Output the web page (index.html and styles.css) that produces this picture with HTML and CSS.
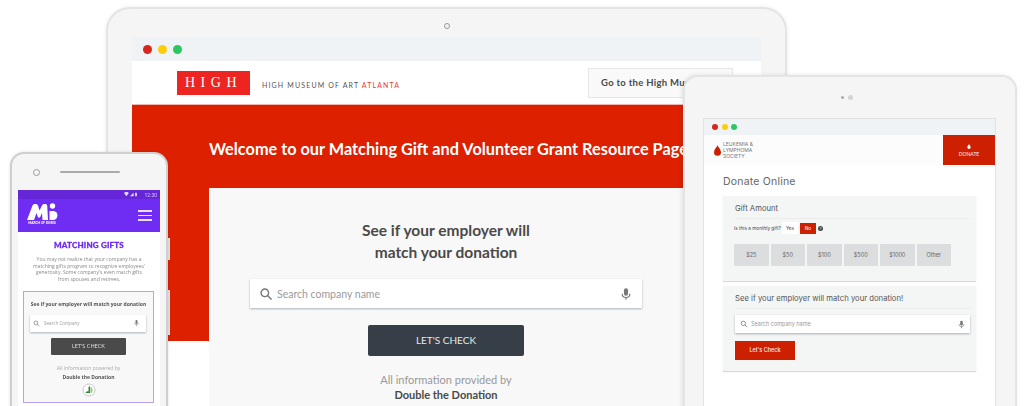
FILE: index.html
```html
<!DOCTYPE html>
<html lang="en">
<head>
    <meta charset="UTF-8">
    <meta name="viewport" content="width=device-width, initial-scale=1.0">
    <title>Matching gifts on three devices</title>
    <link rel="stylesheet" href="styles.css">
</head>
<body>
<div class="stage">

    <!-- laptop -->
    <div class="device laptop">
        <div class="camera"></div>
        <div class="screen">
            <div class="chrome">
                <i class="dot red"></i><i class="dot yellow"></i><i class="dot green"></i>
            </div>
            <div class="high-header">
                <div class="high-logo">HIGH</div>
                <div class="high-name">HIGH MUSEUM OF ART <span>ATLANTA</span></div>
                <div class="high-link">Go to the High Museum</div>
            </div>
            <div class="high-main">
                <div class="high-band">
                    <h1>Welcome to our Matching Gift and Volunteer Grant Resource Page</h1>
                </div>
                <div class="high-card">
                    <h2>See if your employer will<br>match your donation</h2>
                    <div class="search high-search">
                        <svg class="ico-search" viewBox="0 0 24 24"><circle cx="10" cy="10" r="6.5"/><path d="M15 15l6.5 6.5"/></svg>
                        <span class="search-text">Search company name</span>
                        <svg class="ico-mic" viewBox="0 0 24 24"><rect x="8.5" y="2" width="7" height="13" rx="3.5"/><path d="M5.5 11.5c0 4 3 6.5 6.5 6.5s6.5-2.5 6.5-6.5M12 18v4" class="mic-line"/></svg>
                    </div>
                    <div class="check-btn">LET'S CHECK</div>
                    <p class="powered">All information provided by<br><b>Double the Donation</b></p>
                </div>
            </div>
        </div>
    </div>

    <!-- tablet -->
    <div class="device tablet">
        <div class="tablet-cam"><i></i><i></i></div>
        <div class="screen">
            <div class="chrome">
                <i class="dot red"></i><i class="dot yellow"></i><i class="dot green"></i>
            </div>
            <div class="lls-header">
                <svg class="drop" viewBox="0 0 12 18"><path d="M6 0c1 3 6 7 6 12a6 6 0 0 1-12 0C0 7 5 3 6 0z"/></svg>
                <div class="lls-name">LEUKEMIA &amp;<br>LYMPHOMA<br>SOCIETY</div>
                <div class="lls-donate">
                    <svg viewBox="0 0 12 18"><path d="M6 0c1 3 6 7 6 12a6 6 0 0 1-12 0C0 7 5 3 6 0z"/></svg>
                    DONATE
                </div>
            </div>
            <div class="lls-body">
                <div class="lls-title">Donate Online</div>
                <div class="panel">
                    <div class="panel-title">Gift Amount</div>
                    <div class="monthly">
                        <span class="monthly-q">Is this a monthly gift?</span>
                        <span class="yes">Yes</span>
                        <span class="no">No</span>
                        <span class="help">?</span>
                    </div>
                    <div class="amounts">
                        <span>$25</span><span>$50</span><span>$100</span><span>$500</span><span>$1000</span><span>Other</span>
                    </div>
                </div>
                <div class="panel panel-match">
                    <div class="panel-title">See if your employer will match your donation!</div>
                    <div class="search lls-search">
                        <svg class="ico-search" viewBox="0 0 24 24"><circle cx="10" cy="10" r="6.5"/><path d="M15 15l6.5 6.5"/></svg>
                        <span class="search-text">Search company name</span>
                        <svg class="ico-mic" viewBox="0 0 24 24"><rect x="8.5" y="2" width="7" height="13" rx="3.5"/><path d="M5.5 11.5c0 4 3 6.5 6.5 6.5s6.5-2.5 6.5-6.5M12 18v4" class="mic-line"/></svg>
                    </div>
                    <div class="lls-check">Let's Check</div>
                </div>
            </div>
        </div>
    </div>

    <!-- phone -->
    <div class="side-btn btn-one"></div>
    <div class="side-btn btn-two"></div>
    <div class="device phone">
        <div class="phone-top">
            <i class="phone-cam"></i>
            <i class="phone-speaker"></i>
        </div>
        <div class="phone-screen">
            <div class="status">
                <svg viewBox="0 0 30 8"><path d="M0 1.5a6 6 0 0 1 8 0L4 7zM10 7l6-6v6zM18.5 1h3v6h-3z"/></svg>
                <span>12:30</span>
            </div>
            <div class="mod-header">
                <div class="mod-logo">
                    <svg viewBox="0 0 32 18"><path d="M1 17L6.5 2.500Q7 1 8.500 1H10Q11.500 1 12 2.500l1.500 5 2.500-5Q16.500 1 18 1h1.500Q21 1 21.200 2.500L22 17h-5.500l-.5-7-2 4.500h-2L10.500 10 8 17z"/><circle cx="26.500" cy="3" r="2.700"/><path d="M23.500 8H27a4.500 4.500 0 0 1 0 9h-3.500z"/></svg>
                    <span>MARCH OF DIMES</span>
                </div>
                <div class="burger"><i></i><i></i><i></i></div>
            </div>
            <div class="mod-body">
                <div class="mod-title">MATCHING GIFTS</div>
                <p class="mod-text">You may not realize that your company has a matching gifts program to recognize employees' generosity. Some company's even match gifts from spouses and retirees.</p>
                <div class="mod-box">
                    <div class="mod-head">See if your employer will match your donation</div>
                    <div class="search mod-search">
                        <svg class="ico-search" viewBox="0 0 24 24"><circle cx="10" cy="10" r="6.5"/><path d="M15 15l6.5 6.5"/></svg>
                        <span class="search-text">Search Company</span>
                        <svg class="ico-mic" viewBox="0 0 24 24"><rect x="8.5" y="2" width="7" height="13" rx="3.5"/><path d="M5.5 11.5c0 4 3 6.5 6.5 6.5s6.5-2.5 6.5-6.5M12 18v4" class="mic-line"/></svg>
                    </div>
                    <div class="mod-check">LET'S CHECK</div>
                    <div class="mod-powered">All information powered by</div>
                    <div class="mod-dtd">Double the Donation</div>
                    <svg class="dtd-logo" viewBox="0 0 14 14"><circle cx="7" cy="7" r="6" class="dtd-ring"/><path d="M3.500 10a2 2 0 0 1 3-1.500V4L8 3v7z" class="dtd-dark"/><path d="M8.500 3.500c2.500 1.500 2.500 4.500 1 6.500h-1z" class="dtd-light"/></svg>
                </div>
            </div>
        </div>
    </div>

</div>
</body>
</html>
```

FILE: styles.css
```css
html, body {
    margin: 0;
    padding: 0;
    background: #fff;
    font-family: "Lato", sans-serif;
}

.stage {
    position: relative;
    width: 1024px;
    height: 406px;
    overflow: hidden;
    filter: blur(0.35px);
}

.device {
    position: absolute;
    box-sizing: border-box;
    background: #f5f5f5;
    border: 2px solid #e4e4e4;
}

.chrome {
    display: flex;
    align-items: center;
    background: #f0f3f6;
}

.dot {
    border-radius: 50%;
}
.dot.red { background: #d7261b; }
.dot.yellow { background: #fbcd0c; }
.dot.green { background: #2cc763; }

/* shared search box */
.search {
    display: flex;
    align-items: center;
    box-sizing: border-box;
    background: #fff;
    box-shadow: 0 1px 2px rgba(70, 90, 110, 0.45);
}
.search-text {
    flex: 1;
    color: #9a9a9a;
}
.ico-search {
    fill: none;
    stroke: #777;
    stroke-width: 2.4;
}
.ico-mic {
    fill: #777;
}
.mic-line {
    fill: none;
    stroke: #777;
    stroke-width: 2;
}

/* laptop */
.laptop {
    left: 106px;
    top: 7px;
    width: 681px;
    height: 520px;
    border-radius: 24px;
    padding: 28px 24px 0;
    box-shadow: 0 0 4px rgba(0, 0, 0, 0.08);
}

.camera {
    position: absolute;
    left: 336px;
    top: 14px;
    width: 4px;
    height: 4px;
    border: 1px solid #999;
    border-radius: 50%;
}

.laptop .screen {
    height: 100%;
    background: #fff;
}

.laptop .chrome {
    height: 24px;
    padding-left: 11px;
    gap: 6px;
}
.laptop .dot {
    width: 9px;
    height: 9px;
}

.high-header {
    display: flex;
    align-items: center;
    height: 43px;
    padding: 0 28px 0 45px;
    border-bottom: 1px solid #f3b5ad;
}

.high-logo {
    box-sizing: border-box;
    width: 73px;
    height: 24px;
    margin-right: 12px;
    background: #ee2420;
    color: #fff;
    font-family: "Liberation Serif", serif;
    font-size: 14px;
    line-height: 24px;
    letter-spacing: 5.5px;
    text-align: center;
}

.high-name {
    margin-top: 4px;
    color: #555;
    font-size: 7px;
    letter-spacing: 1.15px;
    white-space: nowrap;
}
.high-name span {
    color: #ee3b36;
}

.high-link {
    box-sizing: border-box;
    width: 145px;
    height: 30px;
    margin-left: auto;
    padding-left: 12px;
    background: #f9f9f9;
    border: 1px solid #e6e6e6;
    color: #4a4a4a;
    font-size: 9.5px;
    font-weight: 700;
    line-height: 28px;
    letter-spacing: 0.3px;
    white-space: nowrap;
}

.high-main {
    position: relative;
}

.high-band {
    height: 236px;
    background: #dc2000;
}
.high-band h1 {
    margin: 0;
    padding: 33px 0 0 77px;
    color: #fff;
    font-size: 16.3px;
    font-weight: 700;
    line-height: 22px;
    white-space: nowrap;
}

.high-card {
    position: absolute;
    left: 77px;
    top: 83px;
    width: 474px;
    height: 300px;
    background: #f8f8f8;
    text-align: center;
}
.high-card h2 {
    margin: 0;
    padding-top: 31px;
    color: #4a4a4a;
    font-size: 15.5px;
    font-weight: 700;
    line-height: 22px;
}

.high-search {
    width: 392px;
    height: 29px;
    margin: 16px 0 0 41px;
    padding: 0 9px;
    font-size: 10.5px;
    text-align: left;
}
.high-search .ico-search {
    width: 14px;
    height: 14px;
    margin-right: 4px;
}
.high-search .ico-mic {
    width: 14px;
    height: 14px;
}

.check-btn {
    width: 156px;
    height: 31px;
    margin: 17px 0 0 159px;
    border-radius: 2px;
    background: #363f48;
    color: #e8e8e8;
    font-size: 10px;
    line-height: 31px;
}

.powered {
    margin: 16px 0 0;
    color: #999;
    font-size: 11px;
    line-height: 15px;
}
.powered b {
    color: #4a4a4a;
}

/* tablet */
.tablet {
    left: 683px;
    top: 75px;
    width: 334px;
    height: 420px;
    border-radius: 15px;
    padding: 41px 19px 0 18px;
    box-shadow: -1px 0 4px rgba(0, 0, 0, 0.1);
}

.tablet-cam {
    position: absolute;
    left: 156px;
    top: 18px;
    display: flex;
    align-items: center;
    gap: 4px;
}
.tablet-cam i {
    width: 3px;
    height: 3px;
    border-radius: 50%;
    background: #aaa;
}
.tablet-cam i + i {
    width: 5px;
    height: 5px;
    background: #d4d4d4;
}

.tablet .screen {
    height: 100%;
    background: #fff;
    border: 1px solid #e2e2e2;
}

.tablet .chrome {
    height: 16px;
    padding-left: 8px;
    gap: 3.5px;
}
.tablet .dot {
    width: 6px;
    height: 6px;
}

.lls-header {
    display: flex;
    align-items: center;
    height: 30px;
    padding-left: 10px;
    background: #fcfcfc;
}
.drop {
    width: 7px;
    height: 11px;
    margin-right: 2px;
    fill: #cc1f00;
}
.lls-name {
    flex: 1;
    color: #777;
    font-family: "Inter", sans-serif;
    font-size: 5px;
    line-height: 6px;
}
.lls-donate {
    display: flex;
    flex-direction: column;
    align-items: center;
    justify-content: center;
    gap: 2px;
    width: 52px;
    height: 30px;
    background: #cc2000;
    color: #f4f4f4;
    font-size: 5px;
    line-height: 6px;
}
.lls-donate svg {
    width: 4px;
    height: 5px;
    fill: #fff;
}

.lls-body {
    padding: 10px 20px 0 19px;
}

.lls-title {
    margin-bottom: 7px;
    color: #666;
    font-family: "Inter", sans-serif;
    font-size: 10.5px;
    line-height: 14px;
    letter-spacing: 0.2px;
}

.panel {
    box-sizing: border-box;
    width: 253px;
    height: 85px;
    padding: 7px 6px 0 12px;
    background: #f4f5f5;
    box-shadow: 0 1px 1px rgba(0, 0, 0, 0.15);
}
.panel-match {
    margin-top: 5px;
}
.panel-title {
    padding-bottom: 3px;
    border-bottom: 1px solid #ececec;
    color: #555;
    font-family: "Inter", sans-serif;
    font-size: 7.7px;
    line-height: 12px;
    white-space: nowrap;
}

.monthly {
    display: flex;
    align-items: center;
    height: 12px;
    margin: 3px 0 0 -1px;
    color: #444;
    font-family: "Inter", sans-serif;
    font-size: 4.7px;
    white-space: nowrap;
}
.monthly-q {
    width: 48px;
}
.yes {
    width: 16px;
    margin-right: 2px;
    background: #fff;
    line-height: 12px;
    text-align: center;
}
.no {
    width: 16px;
    background: #cc2000;
    color: #fff;
    line-height: 11px;
    text-align: center;
}
.help {
    width: 5px;
    height: 5px;
    margin-left: 2px;
    border-radius: 50%;
    background: #444;
    color: #fff;
    font-size: 4px;
    line-height: 5px;
    text-align: center;
}

.amounts {
    display: flex;
    gap: 2px;
    margin: 10px 0 0 -1px;
}
.amounts span {
    width: 34.5px;
    height: 22px;
    border-radius: 1px;
    background: #dcdddf;
    color: #666;
    font-family: "Inter", sans-serif;
    font-size: 5.5px;
    line-height: 22px;
    text-align: center;
}

.lls-search {
    width: 235px;
    height: 18px;
    margin-top: 6px;
    padding: 0 4px 0 5px;
    font-family: "Inter", sans-serif;
    font-size: 5.5px;
}
.lls-search .ico-search {
    width: 8px;
    height: 8px;
    margin-right: 3px;
}
.lls-search .ico-mic {
    width: 9px;
    height: 9px;
}

.lls-check {
    width: 60px;
    height: 19px;
    margin-top: 8px;
    background: #cc2000;
    color: #f4f4f4;
    font-family: "Inter", sans-serif;
    font-size: 5.5px;
    font-weight: 500;
    line-height: 19px;
    text-align: center;
}

/* phone */
.side-btn {
    position: absolute;
    left: 167px;
    width: 3px;
    background: #e2e2e2;
}
.btn-one {
    top: 238px;
    height: 22px;
}
.btn-two {
    top: 290px;
    height: 45px;
}

.phone {
    left: 10px;
    top: 152px;
    width: 158px;
    height: 300px;
    border-radius: 14px;
    border-color: #cfcfcf;
    padding: 0 6px;
    box-shadow: 0 0 3px rgba(0, 0, 0, 0.12);
}

.phone-top {
    display: flex;
    align-items: center;
    height: 36px;
    padding-left: 15px;
}
.phone-cam {
    width: 5px;
    height: 5px;
    border: 1px solid #999;
    border-radius: 50%;
}
.phone-speaker {
    width: 60px;
    height: 2px;
    margin-left: 20px;
    background: #aaa;
    border-radius: 1px;
}

.phone-screen {
    height: 100%;
    background: #fff;
}

.status {
    display: flex;
    justify-content: flex-end;
    align-items: center;
    gap: 3px;
    height: 9px;
    padding-right: 3px;
    background: #6526d8;
    color: #d8c8f5;
    font-family: "Roboto", sans-serif;
    font-size: 5px;
}
.status svg {
    width: 18px;
    height: 5px;
    fill: #e4dcf5;
}

.mod-header {
    display: flex;
    justify-content: space-between;
    align-items: center;
    height: 33px;
    padding: 0 8px;
    background: #6f2cf2;
}
.mod-logo {
    display: flex;
    flex-direction: column;
    align-items: center;
    width: 32px;
    margin-bottom: 3px;
    color: #fff;
    font-size: 3.2px;
    font-weight: 900;
    line-height: 4px;
    white-space: nowrap;
}
.mod-logo svg {
    width: 32px;
    height: 18px;
    fill: #fff;
}
.burger {
    display: flex;
    flex-direction: column;
    gap: 3px;
}
.burger i {
    width: 14px;
    height: 1.5px;
    background: #e8defc;
}

.mod-body {
    padding: 0 6px;
    text-align: center;
}
.mod-title {
    padding-top: 8px;
    color: #6f2cf2;
    font-size: 8px;
    font-weight: 900;
    line-height: 10px;
    letter-spacing: 0.2px;
    -webkit-text-stroke: 0.3px #6f2cf2;
}
.mod-text {
    margin: 6px 0 0;
    padding: 0 6px;
    color: #888;
    font-family: "Open Sans", sans-serif;
    font-size: 5px;
    line-height: 6.7px;
}

.mod-box {
    box-sizing: border-box;
    width: 131px;
    height: 112px;
    margin: 8px 0 0 -1px;
    padding: 9px 6px 0;
    background: #f8f8f8;
    border: 1px solid #b9a3ee;
}
.mod-head {
    color: #555;
    font-family: "Open Sans", sans-serif;
    font-size: 5px;
    font-weight: 700;
    line-height: 7px;
    white-space: nowrap;
}
.mod-search {
    width: 116px;
    height: 17px;
    margin-top: 7px;
    padding: 0 6px 0 3px;
    font-family: "Open Sans", sans-serif;
    font-size: 4.5px;
    text-align: left;
}
.mod-search .ico-search {
    width: 7px;
    height: 7px;
    margin-right: 4px;
}
.mod-search .ico-mic {
    width: 7px;
    height: 8px;
}
.mod-check {
    width: 75px;
    height: 17px;
    margin: 6px 0 0 21px;
    border-radius: 1px;
    background: #4a4a4a;
    color: #ddd;
    font-size: 5.5px;
    line-height: 17px;
}
.mod-powered {
    margin-top: 10px;
    color: #aaa;
    font-family: "Open Sans", sans-serif;
    font-size: 5px;
    line-height: 7px;
}
.mod-dtd {
    margin-top: 2px;
    color: #555;
    font-family: "Open Sans", sans-serif;
    font-size: 5px;
    font-weight: 700;
    line-height: 7px;
}
.dtd-logo {
    display: block;
    width: 14px;
    height: 14px;
    margin: 2px auto 0;
}
.dtd-ring {
    fill: #fff;
    stroke: #bbb;
    stroke-width: 0.8;
}
.dtd-dark { fill: #2e8b3d; }
.dtd-light { fill: #8ccf6a; }
```
